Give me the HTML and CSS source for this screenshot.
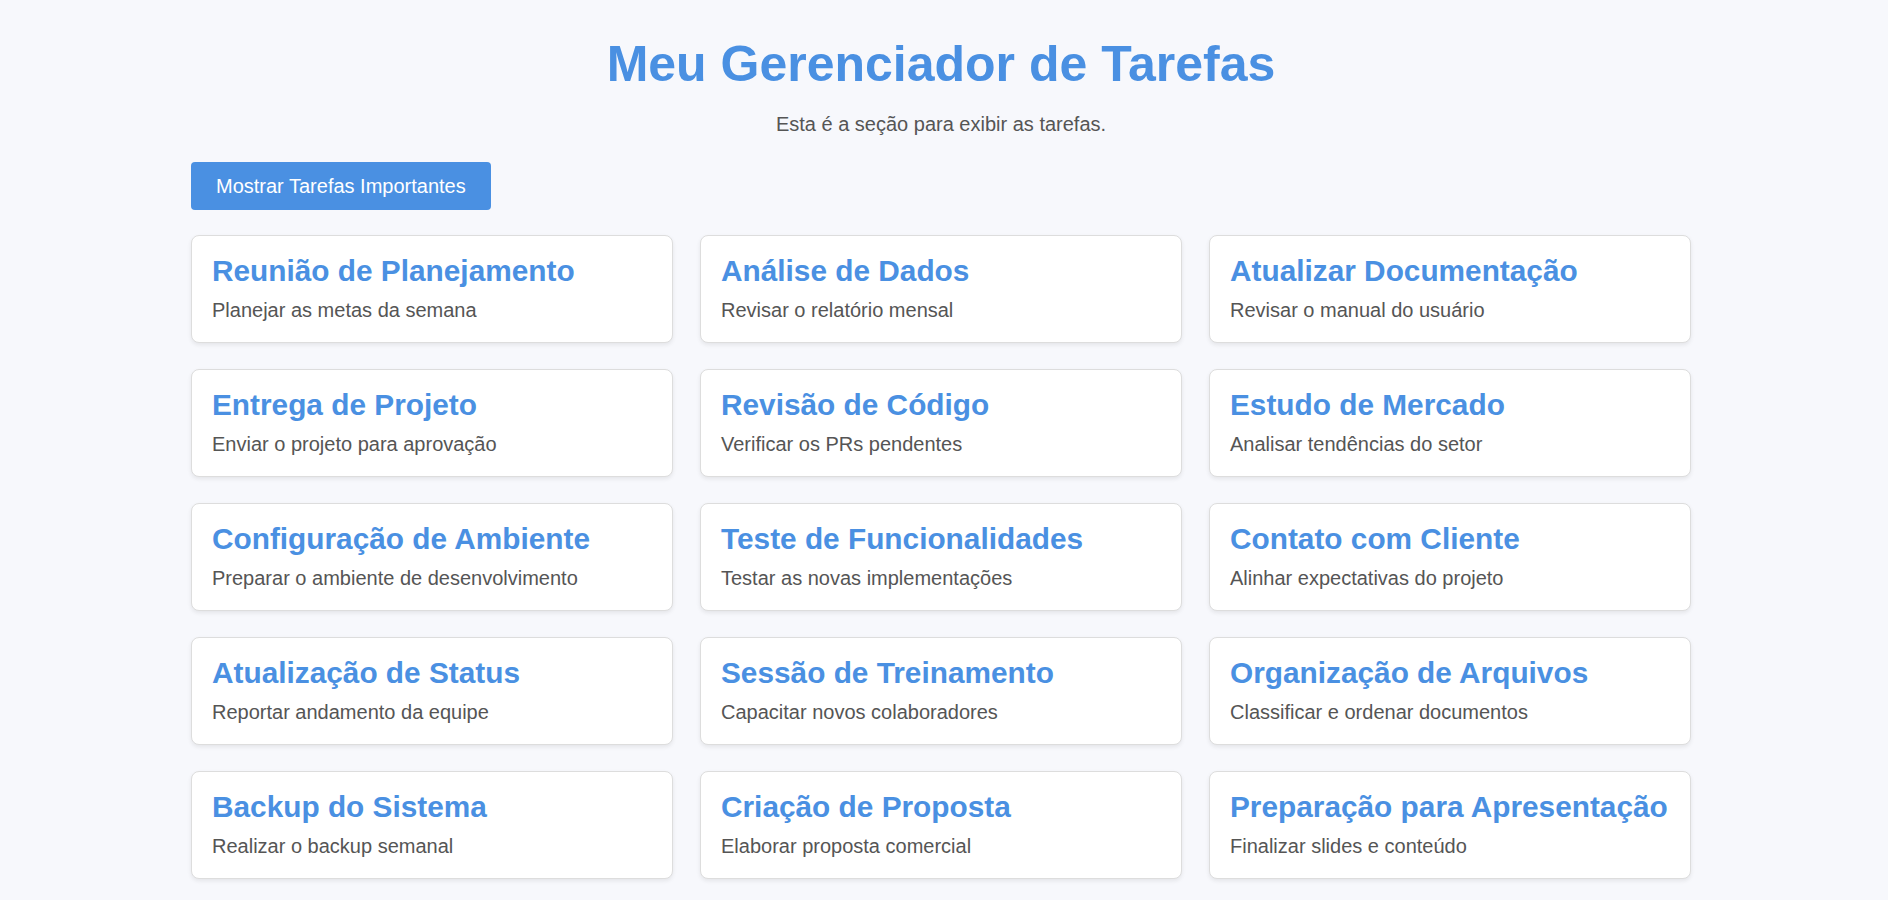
FILE: index.html
```html
<!DOCTYPE html>
<html lang="pt-BR">
<head>
<meta charset="UTF-8">
<title>Meu Gerenciador de Tarefas</title>
<link rel="stylesheet" href="styles.css">
</head>
<body>
<div class="container">
  <h1 class="title">Meu Gerenciador de Tarefas</h1>
  <p class="subtitle">Esta é a seção para exibir as tarefas.</p>
  <button class="btn">Mostrar Tarefas Importantes</button>
  <div class="grid">
    <div class="card"><h3 class="card-title">Reunião de Planejamento</h3><p class="card-desc">Planejar as metas da semana</p></div>
    <div class="card"><h3 class="card-title">Análise de Dados</h3><p class="card-desc">Revisar o relatório mensal</p></div>
    <div class="card"><h3 class="card-title">Atualizar Documentação</h3><p class="card-desc">Revisar o manual do usuário</p></div>
    <div class="card"><h3 class="card-title">Entrega de Projeto</h3><p class="card-desc">Enviar o projeto para aprovação</p></div>
    <div class="card"><h3 class="card-title">Revisão de Código</h3><p class="card-desc">Verificar os PRs pendentes</p></div>
    <div class="card"><h3 class="card-title">Estudo de Mercado</h3><p class="card-desc">Analisar tendências do setor</p></div>
    <div class="card"><h3 class="card-title">Configuração de Ambiente</h3><p class="card-desc">Preparar o ambiente de desenvolvimento</p></div>
    <div class="card"><h3 class="card-title">Teste de Funcionalidades</h3><p class="card-desc">Testar as novas implementações</p></div>
    <div class="card"><h3 class="card-title">Contato com Cliente</h3><p class="card-desc">Alinhar expectativas do projeto</p></div>
    <div class="card"><h3 class="card-title">Atualização de Status</h3><p class="card-desc">Reportar andamento da equipe</p></div>
    <div class="card"><h3 class="card-title">Sessão de Treinamento</h3><p class="card-desc">Capacitar novos colaboradores</p></div>
    <div class="card"><h3 class="card-title">Organização de Arquivos</h3><p class="card-desc">Classificar e ordenar documentos</p></div>
    <div class="card"><h3 class="card-title">Backup do Sistema</h3><p class="card-desc">Realizar o backup semanal</p></div>
    <div class="card"><h3 class="card-title">Criação de Proposta</h3><p class="card-desc">Elaborar proposta comercial</p></div>
    <div class="card"><h3 class="card-title">Preparação para Apresentação</h3><p class="card-desc">Finalizar slides e conteúdo</p></div>
  </div>
</div>
</body>
</html>
```
FILE: styles.css
```css
html, body {
  margin: 0;
  padding: 0;
}
body {
  background: #f7f8fc;
  font-family: "Liberation Sans", Arial, sans-serif;
  padding-right: 6px;
}
.container {
  width: 1500px;
  margin: 0 auto;
  padding-bottom: 40px;
}
.title {
  margin: 36px 0 20px;
  font-size: 50px;
  line-height: 57px;
  font-weight: bold;
  color: #4a90e2;
  text-align: center;
}
.subtitle {
  margin: 0 0 26px;
  font-size: 20px;
  line-height: 23px;
  color: #555;
  text-align: center;
}
.btn {
  display: block;
  margin: 0 0 25px;
  padding: 12.5px 25px;
  font-family: "Liberation Sans", Arial, sans-serif;
  font-size: 20px;
  line-height: 23px;
  color: #fff;
  background: #4a90e2;
  border: none;
  border-radius: 4px;
}
.grid {
  display: grid;
  grid-template-columns: repeat(3, 1fr);
  column-gap: 27px;
  row-gap: 26px;
}
.card {
  background: #fff;
  border: 1px solid #ddd;
  border-radius: 8px;
  padding: 20px;
  box-shadow: 0 2px 4px rgba(0, 0, 0, 0.08);
}
.card-title {
  margin: 0 0 13px;
  font-size: 29.8px;
  line-height: 30px;
  font-weight: bold;
  white-space: nowrap;
  color: #4a90e2;
}
.card-desc {
  margin: 0;
  font-size: 20px;
  line-height: 23px;
  color: #555;
}
```
